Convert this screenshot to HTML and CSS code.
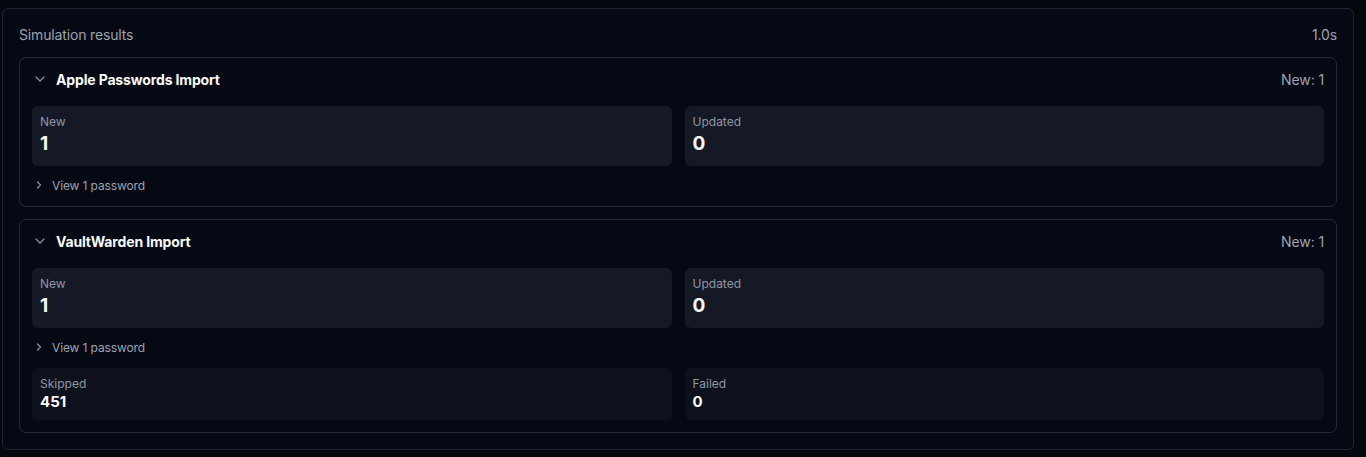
FILE: index.html
```html
<!DOCTYPE html>
<html lang="en">
<head>
<meta charset="utf-8">
<title>Simulation results</title>
<link rel="stylesheet" href="styles.css">
</head>
<body>
<section class="panel">
  <div class="panel-head">
    <span class="panel-title">Simulation results</span>
    <span class="panel-time">1.0s</span>
  </div>
  <div class="cards">
    <div class="card">
      <div class="card-head">
        <div class="card-title">
          <svg class="chev-down" width="10" height="6" viewBox="0 0 10 6"><path d="M1 1l4 4 4-4" fill="none" stroke="currentColor" stroke-width="1.2" stroke-linecap="round" stroke-linejoin="round"/></svg>
          <span>Apple Passwords Import</span>
        </div>
        <span class="card-meta">New: 1</span>
      </div>
      <div class="stats">
        <div class="stat"><div class="stat-label">New</div><div class="stat-value">1</div></div>
        <div class="stat"><div class="stat-label">Updated</div><div class="stat-value">0</div></div>
      </div>
      <div class="view-row">
        <svg class="chev-right" width="6" height="8" viewBox="0 0 6 8"><path d="M1.5 1l3 3-3 3" fill="none" stroke="currentColor" stroke-width="1.2" stroke-linecap="round" stroke-linejoin="round"/></svg>
        <span>View 1 password</span>
      </div>
    </div>
    <div class="card">
      <div class="card-head">
        <div class="card-title">
          <svg class="chev-down" width="10" height="6" viewBox="0 0 10 6"><path d="M1 1l4 4 4-4" fill="none" stroke="currentColor" stroke-width="1.2" stroke-linecap="round" stroke-linejoin="round"/></svg>
          <span>VaultWarden Import</span>
        </div>
        <span class="card-meta">New: 1</span>
      </div>
      <div class="stats">
        <div class="stat"><div class="stat-label">New</div><div class="stat-value">1</div></div>
        <div class="stat"><div class="stat-label">Updated</div><div class="stat-value">0</div></div>
      </div>
      <div class="view-row">
        <svg class="chev-right" width="6" height="8" viewBox="0 0 6 8"><path d="M1.5 1l3 3-3 3" fill="none" stroke="currentColor" stroke-width="1.2" stroke-linecap="round" stroke-linejoin="round"/></svg>
        <span>View 1 password</span>
      </div>
      <div class="stats stats-small">
        <div class="stat stat-dim"><div class="stat-label">Skipped</div><div class="stat-value small">451</div></div>
        <div class="stat stat-dim"><div class="stat-label">Failed</div><div class="stat-value small">0</div></div>
      </div>
    </div>
  </div>
</section>
</body>
</html>
```

FILE: styles.css
```css
* { box-sizing: border-box; }
html, body { height: 100%; }
body {
  margin: 0;
  padding: 8px 12px 0 2px;
  background: #04070e;
  font-family: Inter, "Noto Sans", "Liberation Sans", sans-serif;
  color: #e5e7eb;
}
.panel {
  border: 1px solid #1e2431;
  border-radius: 6px;
  background: #050913;
  padding: 16px;
}
.panel-head {
  display: flex;
  justify-content: space-between;
  align-items: center;
  height: 18px;
  margin-bottom: 14px;
  font-size: 14px;
  letter-spacing: -0.15px;
  color: #9ca3af;
}
.cards {
  display: flex;
  flex-direction: column;
  gap: 12px;
}
.card {
  border: 1px solid #232a37;
  border-radius: 7px;
  padding: 12px;
}
.card-head {
  display: flex;
  justify-content: space-between;
  align-items: center;
  height: 18px;
  margin-bottom: 18px;
}
.card-title {
  display: flex;
  align-items: center;
  gap: 11px;
  padding-left: 3px;
  font-size: 14px;
  font-weight: 700;
  letter-spacing: -0.15px;
  color: #f9fafb;
}
.chev-down { color: #8b93a1; }
.card-meta {
  font-size: 14px;
  letter-spacing: -0.1px;
  color: #9ca3af;
}
.stats {
  display: grid;
  grid-template-columns: 1fr 1fr;
  gap: 13px;
}
.stat {
  background: #141925;
  border-radius: 6px;
  padding: 8px 8px;
}
.stat-dim { background: #0d111b; }
.stat-label {
  font-size: 12px;
  line-height: 16px;
  color: #8f97a5;
}
.stat-value {
  font-size: 19px;
  line-height: 28px;
  font-weight: 700;
  color: #f9fafb;
}
.stat-value.small {
  font-size: 15px;
  line-height: 20px;
}
.view-row {
  display: flex;
  align-items: center;
  gap: 10px;
  height: 18px;
  margin-top: 10px;
  padding-left: 4px;
  font-size: 12px;
  letter-spacing: -0.12px;
  color: #9ca3af;
}
.chev-right { color: #8b93a1; }
.stats-small { margin-top: 12px; }
```
